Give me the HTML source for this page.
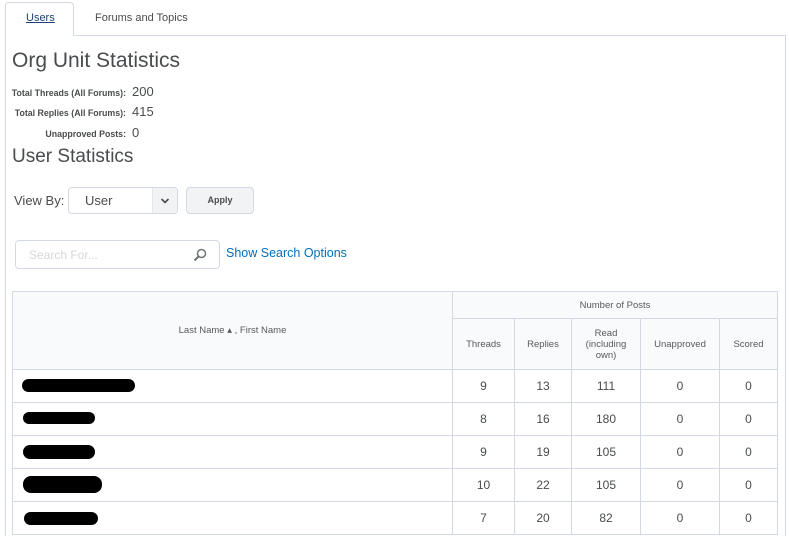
<!DOCTYPE html>
<html style="width:789px;height:536px;overflow:hidden"><head><style>
*{margin:0;padding:0;box-sizing:border-box}
body{width:789px;height:536px;overflow:hidden;background:#fff;font-family:"Liberation Sans",sans-serif;color:#494c4e;position:relative}
.a{position:absolute;white-space:nowrap}
.lbl{font-size:8.8px;font-weight:bold;color:#494c4e;text-align:right;width:126px;left:0}
.val{font-size:13px;left:132px}
table{position:absolute;left:12px;top:291px;border-collapse:collapse;width:766px;font-size:9.5px}
td,th{border:1px solid #d3d9e3;text-align:center;font-weight:normal;color:#565a5c}
th{background:#f9fafb}
td{height:33px;font-size:12px;color:#494c4e}
.blk{position:absolute;background:#000;border-radius:8px}
</style></head><body>
<div class="a" style="left:5px;top:2px;width:69px;height:34px;border:1px solid #d3d9e3;border-bottom:none;border-radius:4px 4px 0 0;background:#fff;z-index:2"></div>
<div class="a" style="left:5px;top:35px;width:781px;height:501px;border:1px solid #d3d9e3;border-bottom:none"></div>
<div class="a" style="left:26px;top:12px;font-size:11px;color:#1c3f75;text-decoration:underline;z-index:3">Users</div>
<div class="a" style="left:95px;top:12px;font-size:11px;color:#494c4e">Forums and Topics</div>
<div class="a" style="left:12px;top:49px;font-size:21px;color:#494c4e">Org Unit Statistics</div>
<div class="a lbl" style="top:88px">Total Threads (All Forums):</div><div class="a val" style="top:84px">200</div>
<div class="a lbl" style="top:108px">Total Replies (All Forums):</div><div class="a val" style="top:104px">415</div>
<div class="a lbl" style="top:129px">Unapproved Posts:</div><div class="a val" style="top:125px">0</div>
<div class="a" style="left:12px;top:146px;font-size:19px">User Statistics</div>
<div class="a" style="left:14px;top:193px;font-size:13px">View By:</div>
<div class="a" style="left:68px;top:187px;width:110px;height:27px;border:1px solid #d3d9e3;border-radius:4px;overflow:hidden">
<div class="a" style="left:16px;top:5px;font-size:13px">User</div>
<div class="a" style="left:83px;top:0;width:26px;height:27px;background:#f1f3f5;border-left:1px solid #e3e6ea"></div>
<svg class="a" style="left:91px;top:9px" width="10" height="8"><path d="M1.5 2L5 5.5 8.5 2" stroke="#494c4e" stroke-width="1.6" fill="none"/></svg>
</div>
<div class="a" style="left:186px;top:187px;width:68px;height:27px;border:1px solid #d3d9e3;border-radius:4px;background:#f1f3f5;font-size:9px;font-weight:bold;text-align:center;line-height:25px">Apply</div>
<div class="a" style="left:15px;top:240px;width:205px;height:29px;border:1px solid #d3d9e3;border-radius:4px"><span class="a" style="left:13px;top:7px;font-size:12px;color:#d3d7db">Search For...</span>
<svg class="a" style="left:177px;top:7px" width="14" height="14"><circle cx="8.5" cy="5.5" r="4" stroke="#6e7376" stroke-width="1.5" fill="none"/><path d="M5.5 8.5L1.5 12.5" stroke="#6e7376" stroke-width="2"/></svg></div>
<div class="a" style="left:226px;top:246px;font-size:12.5px;color:#006fbf">Show Search Options</div>
<table>
<tr><th rowspan="2" style="width:440px;height:78px;vertical-align:top;padding-top:33px">Last Name ▴ , First Name</th><th colspan="5" style="height:27px">Number of Posts</th></tr>
<tr><th style="width:62px;height:51px">Threads</th><th style="width:57px">Replies</th><th style="width:69px">Read<br>(including<br>own)</th><th style="width:79px">Unapproved</th><th>Scored</th></tr>
<tr><td></td><td>9</td><td>13</td><td>111</td><td>0</td><td>0</td></tr>
<tr><td></td><td>8</td><td>16</td><td>180</td><td>0</td><td>0</td></tr>
<tr><td></td><td>9</td><td>19</td><td>105</td><td>0</td><td>0</td></tr>
<tr><td></td><td>10</td><td>22</td><td>105</td><td>0</td><td>0</td></tr>
<tr><td></td><td>7</td><td>20</td><td>82</td><td>0</td><td>0</td></tr>
</table>
<div class="blk" style="left:22px;top:379px;width:113px;height:13px"></div>
<div class="blk" style="left:23px;top:412px;width:72px;height:12px"></div>
<div class="blk" style="left:23px;top:445px;width:72px;height:14px"></div>
<div class="blk" style="left:23px;top:476px;width:79px;height:17px"></div>
<div class="blk" style="left:24px;top:512px;width:74px;height:13px"></div>
</body></html>
